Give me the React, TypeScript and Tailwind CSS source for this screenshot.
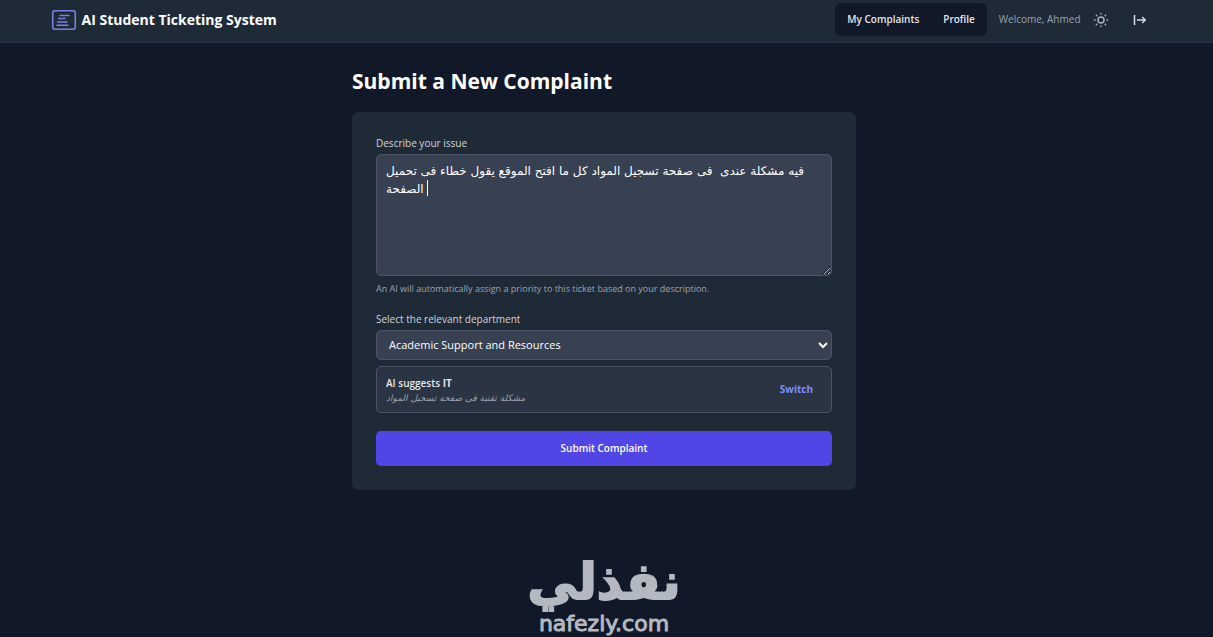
import { useState } from 'react'

const departments = ['Academic Support and Resources', 'IT', 'Finance', 'Student Affairs']

function LogoIcon() {
  return (
    <svg width="26" height="22" viewBox="0 0 26 22" fill="none" stroke="#7a80e0" strokeWidth="1.6" strokeLinecap="round" aria-hidden="true">
      <rect x="1.7" y="1.7" width="22.6" height="18.6" rx="2.5" />
      <path d="M9 6.5h9M7.5 9.5h6.5M6.5 13h9.5M6 16.2h11" strokeWidth="1.5" />
    </svg>
  )
}

function SunIcon() {
  return (
    <svg width="16" height="16" viewBox="0 0 18 18" fill="none" stroke="#aeb4be" strokeWidth="1.6" strokeLinecap="round" aria-hidden="true">
      <circle cx="9" cy="9" r="3.4" />
      <path d="M9 1.6v.7M9 15.7v.7M1.6 9h.7M15.7 9h.7M3.8 3.8l.5.5M13.7 13.7l.5.5M3.8 14.2l.5-.5M13.7 4.3l.5-.5" />
    </svg>
  )
}

function LogoutIcon() {
  return (
    <svg width="14" height="12" viewBox="0 0 14 12" fill="none" stroke="#d9dce1" strokeWidth="1.5" aria-hidden="true">
      <path d="M1.5 1v10M4 6h8M9.2 3l3 3-3 3" />
    </svg>
  )
}

function Header() {
  return (
    <header className="border-b border-[#263342] bg-[#1f2a37]">
      <div className="mx-auto flex h-[42px] w-full max-w-[1128px] items-center justify-between px-2 pb-[3px]">
        <a href="#home" className="flex items-center gap-[5px] text-[14px] font-bold text-white">
          <LogoIcon />
          AI Student Ticketing System
        </a>
        <div className="flex items-center">
          <nav className="flex h-[33px] items-center gap-6 rounded-md bg-[#111827] px-3 text-[10px] font-semibold text-[#e5e7eb]">
            <a href="#complaints">My Complaints</a>
            <a href="#profile">Profile</a>
          </nav>
          <span className="ml-3 text-[10px] text-[#9ca3af]">Welcome, Ahmed</span>
          <button type="button" aria-label="Toggle theme" className="ml-3"><SunIcon /></button>
          <button type="button" aria-label="Log out" className="mr-4 ml-6"><LogoutIcon /></button>
        </div>
      </div>
    </header>
  )
}

function ComplaintForm() {
  const [issue, setIssue] = useState('فيه مشكلة عندى  فى صفحة تسجيل المواد كل ما افتح الموقع يقول خطاء فى تحميل\nالصفحة ')
  const [department, setDepartment] = useState(departments[0])
  return (
    <form className="rounded-md bg-[#1f2a37] px-6 pt-[22px] pb-6" onSubmit={(e) => e.preventDefault()}>
      <label htmlFor="issue" className="mb-[2px] block text-[10px] leading-[18px] font-medium text-[#d1d5db]">Describe your issue</label>
      <div className="relative">
        <textarea
          id="issue"
          dir="ltr"
          value={issue}
          onChange={(e) => setIssue(e.target.value)}
          className="block h-[122px] w-full resize-y rounded-[5px] border border-[#4b5563] bg-[#374151] px-[9px] py-[7px] font-['DejaVu_Sans',sans-serif] text-[12px] leading-[18px] text-white outline-none [color-scheme:dark]"
        />
        <span className="absolute top-[26px] left-[51px] h-4 w-px bg-white" aria-hidden="true" />
      </div>
      <p className="mt-1 text-[9px] leading-[18px] text-[#9ca3af]">An AI will automatically assign a priority to this ticket based on your description.</p>

      <label htmlFor="department" className="mt-3 mb-[2px] block text-[10px] leading-[18px] font-medium text-[#d1d5db]">Select the relevant department</label>
      <div className="relative">
        <select
          id="department"
          value={department}
          onChange={(e) => setDepartment(e.target.value)}
          className="block h-[30px] w-full appearance-none rounded-[5px] border border-[#4b5563] bg-[#374151] px-3 text-[11px] text-white"
        >
          {departments.map((d) => <option key={d}>{d}</option>)}
        </select>
        <svg className="pointer-events-none absolute top-3 right-1" width="10" height="7" viewBox="0 0 10 7" fill="none" stroke="#fff" strokeWidth="2" aria-hidden="true">
          <path d="M1 1l4 4 4-4" />
        </svg>
      </div>

      <div className="mt-[6px] flex h-[47px] items-center justify-between rounded-[5px] border border-[#4b5563] bg-[#2b3442] pr-[18px] pl-[9px]">
        <div>
          <p className="text-[10px] leading-4 font-semibold text-[#e5e7eb]">AI suggests <strong className="font-bold">IT</strong></p>
          <p className="font-['DejaVu_Sans',sans-serif] text-[9px] leading-[14px] text-[#9ca3af] italic">مشكلة تقنية فى صفحة تسجيل المواد</p>
        </div>
        <button type="button" className="text-[10px] font-bold text-[#818cf8]" onClick={() => setDepartment('IT')}>Switch</button>
      </div>

      <button type="submit" className="mt-[18px] block h-[35px] w-full rounded-[5px] bg-[#4f46e5] text-[10px] font-semibold text-white">Submit Complaint</button>
    </form>
  )
}

export default function App() {
  return (
    <div className="flex min-h-screen flex-col bg-[#111827] font-['Open_Sans','Noto_Sans',sans-serif]">
      <Header />
      <div className="flex grow flex-col pr-[5px]">
        <main className="mx-auto w-full max-w-[504px] pt-[22px]">
          <h1 className="mb-[15px] text-[21px] leading-8 font-bold text-white">Submit a New Complaint</h1>
          <ComplaintForm />
        </main>
        <footer className="mt-auto flex flex-col items-center text-[#b5b8c1]">
          <span lang="ar" dir="rtl" className="font-['DejaVu_Sans',sans-serif] text-[50px] leading-[56px] font-bold [-webkit-text-stroke:2px_#b5b8c1]">نفذلي</span>
          <span className="font-['DejaVu_Sans',sans-serif] text-[22px] leading-[27px] [-webkit-text-stroke:1px_#b5b8c1]">nafezly.com</span>
        </footer>
      </div>
    </div>
  )
}
